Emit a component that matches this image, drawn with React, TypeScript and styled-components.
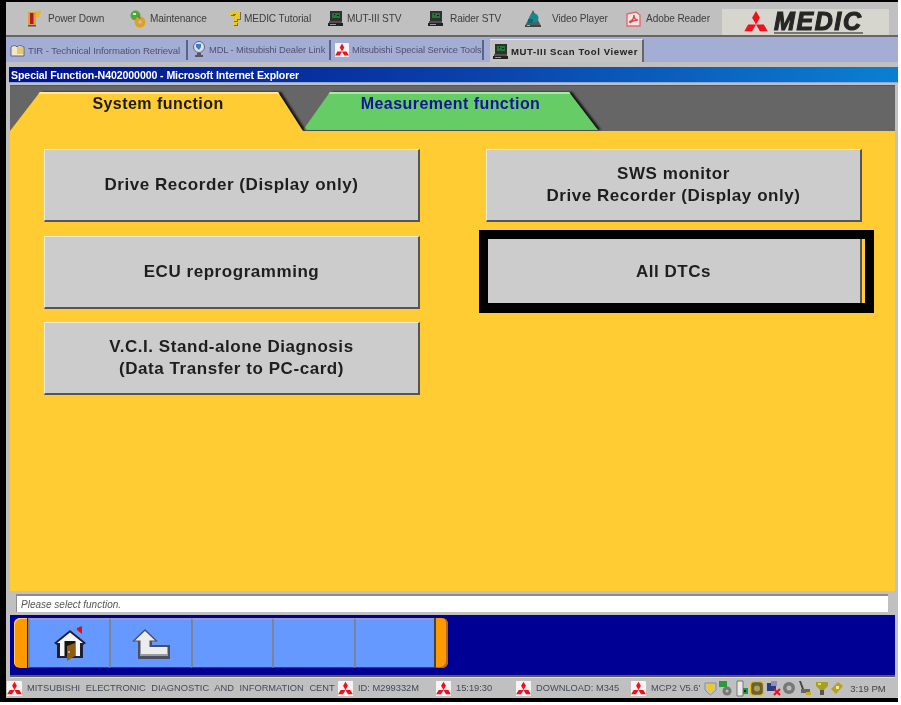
import React from "react";
import styled, { createGlobalStyle, css } from "styled-components";

const Global = createGlobalStyle`
  html, body { margin: 0; padding: 0; background: #fff; }
  body { width: 901px; height: 705px; overflow: hidden; font-family: "Liberation Sans", Arial, sans-serif; }
`;

const soft = (r: number) => css`filter: blur(${r}px);`;

const Frame = styled.div`
  width: 898px; height: 702px; background: #000;
  padding: 2px 0 4px 6px; box-sizing: border-box;
  display: flex; flex-direction: column;
`;
const Toolbar = styled.div`
  height: 33px; background: #c0c0c0; border-bottom: 2px solid #666;
  display: flex; align-items: center; flex: none;
`;
const ToolItem = styled.div<{ $w: number; $gap: number; $tg: number }>`
  flex: none; width: ${p => p.$w}px; margin-left: ${p => p.$gap}px;
  display: flex; align-items: center; gap: ${p => p.$tg}px; height: 20px;
`;
const ToolText = styled.span`
  font-size: 10.1px; color: #3c3c3c; white-space: nowrap; letter-spacing: -0.1px;
  ${soft(0.55)}
`;
const IconBox = styled.span`
  display: inline-flex; flex: none; ${soft(0.35)}
`;
const LogoPlate = styled.div`
  margin-left: 11px; margin-top: 7px; width: 167px; height: 26px; background: #d6d6ce;
  display: flex; align-items: center; flex: none; padding-left: 22px; box-sizing: border-box; gap: 6px;
`;
const LogoWord = styled.div`
  display: flex; flex-direction: column; align-items: stretch; ${soft(0.4)}
`;
const MedicText = styled.span`
  font-size: 25px; line-height: 20px; font-weight: 700; font-style: italic; color: #262626;
  letter-spacing: 1.6px; -webkit-text-stroke: 1.1px #262626; white-space: nowrap;
`;
const LogoRule = styled.span`
  height: 2px; background: #77776f; margin-top: 1px;
`;
const LinkBar = styled.div`
  height: 25px; flex: none; background: #a4aed4; display: flex; align-items: stretch;
`;
const LinkItem = styled.div<{ $w: number }>`
  flex: none; width: ${p => p.$w}px; display: flex; align-items: center; gap: 3px; box-sizing: border-box;
  padding-left: 4px; border-right: 2px solid #5a6488; margin: 3px 0 2px;
`;
const LinkText = styled.span<{ $fs: number }>`
  font-size: ${p => p.$fs}px; color: #50506e; white-space: nowrap; letter-spacing: -0.08px; ${soft(0.55)}
`;
const ActiveLink = styled.div`
  flex: none; width: 154px; margin: 2px 0 0 6px; background: #c4c4c4; display: flex; align-items: center; gap: 2px;
  padding-left: 3px; box-sizing: border-box; border-right: 2px solid #666; border-top: 1px solid #e6e6e6;
`;
const ActiveText = styled.span`
  font-size: 9.6px; font-weight: 700; color: #222; white-space: nowrap; letter-spacing: 0.6px; ${soft(0.45)}
`;
const Window = styled.div`
  flex: 1; display: flex; flex-direction: column; background: #c0c0c0; padding: 5px 0 0 3px; min-height: 0;
`;
const TitleBar = styled.div`
  height: 16px; flex: none; background: linear-gradient(90deg, #00108c 0%, #0a3fa8 50%, #0a80d0 100%);
  display: flex; align-items: center; padding-left: 2px;
  border-bottom: 1px solid #8ea8d8; box-sizing: border-box;
`;
const TitleText = styled.span`
  font-size: 10.6px; font-weight: 700; color: #fff; letter-spacing: -0.1px; white-space: nowrap; ${soft(0.45)}
`;
const Body = styled.div`
  flex: 1; display: flex; flex-direction: column; margin: 2px 3px 0 1px; min-height: 0;
`;
const TabStrip = styled.div`
  height: 46px; flex: none; background: #666; display: flex; align-items: flex-end;
  border-top: 1px solid #555; box-sizing: border-box;
`;
const TabShadow = styled.div<{ $front?: boolean }>`
  filter: drop-shadow(3px 0 1px #111);
  position: relative; z-index: ${p => (p.$front ? 2 : 1)};
  margin-bottom: ${p => (p.$front ? 0 : 1)}px;
`;
const Tab = styled.div<{ $bg: string; $hi: string; $w: number; $h: number; $top1: number; $top2: number; $fg: string; $pad: number }>`
  width: ${p => p.$w}px; height: ${p => p.$h}px; background: ${p => p.$bg};
  clip-path: polygon(0 100%, ${p => p.$top1}px 0, ${p => p.$top2}px 0, 100% 100%);
  box-shadow: inset 0 2px 0 ${p => p.$hi};
  box-sizing: border-box; padding: 3px 0 0 ${p => p.$pad}px; text-align: center;
  font-size: 16px; line-height: 18px; font-weight: 700; color: ${p => p.$fg};
  letter-spacing: 0.45px;
`;
const TabLabel = styled.span`
  display: inline-block; ${soft(0.4)}
`;
const Content = styled.div`
  position: relative; z-index: 3;
  flex: 1; background: #fc3; display: grid; grid-template-columns: 376px 376px; column-gap: 66px;
  grid-auto-rows: 73px; row-gap: 13.5px; padding: 18px 0 0 34px; align-content: start;
  min-height: 0;
`;
const FnButton = styled.button<{ $framed?: boolean }>`
  position: relative; margin: 0; padding: 0; background: #ccc;
  border-style: solid; border-width: 1px 2px 2px 1px;
  border-color: #ecead8 #555 #555 #ecead8;
  font-family: "Liberation Sans", Arial, sans-serif; font-weight: 700; font-size: 17px; line-height: 22px; color: #1e1e1e;
  letter-spacing: 0.55px;
  ${p => p.$framed && css`
    &::after {
      content: ""; position: absolute; top: -7px; right: -14px; bottom: -6px; left: -8px;
      border: 9px solid #000; box-sizing: border-box; border-bottom-width: 10px;
    }
  `}
`;
const FnLabel = styled.span`
  display: block; ${soft(0.35)}
`;
const StatusRow = styled.div`
  height: 24px; flex: none; background: #c0c0c0; padding: 3px 7px 3px 6px; box-sizing: border-box;
  display: flex;
`;
const StatusField = styled.div`
  flex: 1; background: #fff; border-top: 2px solid #8c8c8c; border-left: 1px solid #8c8c8c;
  display: flex; align-items: center; padding-left: 4px;
`;
const StatusText = styled.span`
  font-size: 10px; font-style: italic; color: #555; ${soft(0.4)}
`;
const NavBar = styled.div`
  height: 60px; flex: none; background: #000094; display: flex; padding: 3px 0 7px 4px; box-sizing: border-box;
`;
const NavCap = styled.div<{ $side: "l" | "r" }>`
  width: 14px; flex: none; background: #f90; box-sizing: border-box;
  ${p => p.$side === "l"
    ? css`border-radius: 6px 0 0 6px; border-right: 1px solid #222; box-shadow: inset 1px 1px 0 #fc6;`
    : css`border-radius: 0 6px 6px 0; border-left: 2px solid #444; box-shadow: inset -2px -1px 0 #b36b00;`}
`;
const NavCell = styled.div<{ $w: number }>`
  width: ${p => p.$w}px; flex: none; background: #69f; box-sizing: border-box;
  border-top: 2px solid #9a9ac4; border-left: 2px solid #7a8494; border-bottom: 1px solid #2a3a88;
  display: flex; align-items: center; justify-content: center;
  &:first-of-type { border-left: 0; }
`;
const Divider = styled.div`
  height: 3px; flex: none; background: #5a5a5a; border-bottom: 1px solid #ddd; box-sizing: border-box;
`;
const StatusBar = styled.div`
  height: 20px; flex: none; background: #c0c0c0; display: flex; align-items: center;
  margin: 0 0 0 -3px; box-sizing: border-box; padding-left: 0;
`;
const BarCell = styled.div<{ $w: number; $ws?: number }>`
  flex: none; width: ${p => p.$w}px; display: flex; align-items: center; gap: 5px;
  overflow: hidden; white-space: nowrap; word-spacing: ${p => p.$ws ?? 0}px;
`;
const BarText = styled.span`
  font-size: 9.3px; color: #44485c; ${soft(0.5)}
`;
const Tray = styled.div`
  display: flex; align-items: center; gap: 1.4px; flex: none; ${soft(0.45)}
`;
const Clock = styled.span`
  font-size: 9.6px; color: #444; margin-left: 6px; white-space: nowrap; ${soft(0.5)}
`;

const MitsuMark = ({ s = 14, plate = true }: { s?: number; plate?: boolean }) => (
  <svg width={s} height={s} viewBox="0 0 24 24" style={{ background: plate ? "#f4f4f4" : "transparent", flex: "none" }}>
    <path fill="#f2101c" d="M12 1l3.900 6.750L12 14.500 8.100 7.750zM12 14.500h7.800l3.900 6.750h-7.800zM12 14.500H4.200L.3 21.250h7.800z" />
  </svg>
);
const Power = () => (
  <svg width="14" height="17" viewBox="0 0 14 17">
    <path fill="#dca040" d="M1 2h8v14H1z" /><path fill="#b0182a" d="M3 3h3.500v11H3z" />
    <path fill="#ecb428" d="M9 1h5v3l-2 1v2H9z" /><path fill="#555" d="M1 15h8v1.500H1z" />
  </svg>
);
const Maint = () => (
  <svg width="16" height="18" viewBox="0 0 16 18">
    <circle cx="5.500" cy="5.500" r="5" fill="#4ea83a" /><path fill="#d8e8c8" d="M3 3h3v2H3z" />
    <circle cx="10" cy="12" r="5.500" fill="#e0a020" /><circle cx="10" cy="12" r="1.800" fill="#c0c0c0" />
    <path fill="#6a7a50" d="M8 5l3 3-1 1-3-3z" />
  </svg>
);
const Question = () => (
  <svg width="14" height="17" viewBox="0 0 14 17">
    <path fill="#555" d="M3 2h10v8H10v2H6V7h3V5H7v1H3zM6 13h4v3H6z" opacity=".8" />
    <path fill="#eec820" d="M1 1h11v8H9v2H5V6h3V4H5v1H1zM5 12h4v3H5z" />
  </svg>
);
const Computer = () => (
  <svg width="16" height="17" viewBox="0 0 16 17">
    <path fill="#303030" d="M2 1h12v10H2z" /><path fill="#1e7a30" d="M4 3h8v5H4z" /><path fill="#113" d="M6 4h1v1H6zM9 5h2v1H9z" />
    <path fill="#505050" d="M1 11h13v2H1z" /><path fill="#222" d="M0 13h15v3H0z" /><path fill="#999" d="M2 14h6v1H2z" />
  </svg>
);
const Video = () => (
  <svg width="18" height="19" viewBox="0 0 18 19">
    <path fill="#555c60" d="M1 17l3-6 5-10 5 10 3 6z" /><circle cx="10" cy="9" r="4.500" fill="#138a90" />
    <path fill="#0a6a70" d="M4 10h5v4H4z" /><path fill="#444" d="M1 16h16v2H1z" /><path fill="#aab" d="M3 16h3v1H3z" />
  </svg>
);
const Adobe = () => (
  <svg width="15" height="16" viewBox="0 0 15 16">
    <path fill="#f6e4e4" stroke="#e06a70" strokeWidth="1.400" d="M1 3l9-2 4 3v11H1z" />
    <path fill="none" stroke="#d8484e" strokeWidth="1.400" d="M3 11c3-1 5-3 5-7 0 3 1 5 4 5-3 0-6 1-8 3" />
  </svg>
);
const Book = () => (
  <svg width="15" height="15" viewBox="0 0 15 15">
    <path fill="#f2e8c8" stroke="#5a6488" d="M1 4c1-1 3-2 5-1l1 1 1-1c2-1 4 0 6 1v9H1z" /><path fill="#e8c860" d="M7 4h6v7H7z" />
  </svg>
);
const Globe = () => (
  <svg width="14" height="18" viewBox="0 0 14 18">
    <circle cx="7" cy="6" r="5.500" fill="#dde" stroke="#667" /><path fill="#3a80c0" d="M4 3h5v3l-2 3-3-3z" />
    <path fill="#556" d="M5 12h4v2H5zM3 14h8v2H3z" />
  </svg>
);
const Home = () => (
  <svg width="32" height="36" viewBox="0 0 32 36">
    <path fill="#1c2030" d="M16 4L0 17l3 2v13h26V19l3-2z" />
    <path fill="#f6f6f6" d="M16 6.500L3 17h3v13h20V17h3z" />
    <path fill="#d8121c" d="M23 2l5-2v8l-5-4z" />
    <path fill="#141414" d="M10.500 15h11v15h-11z" />
    <path fill="#8f5c16" d="M13 20l8-3v13l-8 5z" />
    <circle cx="15" cy="26" r="1" fill="#dca" />
  </svg>
);
const UpArrow = () => (
  <svg width="38" height="32" viewBox="0 0 38 32">
    <path fill="#4a5064" d="M13 1L0 13.500h6V31h32V17H20v-3.500h6z" />
    <path fill="#ececec" d="M13 3L3 12.500h5.500V28h27v-9H17.500v-6.500H23z" />
    <path fill="#9a9aa0" d="M8.500 26h27v2h-27z" />
  </svg>
);

const trayIcons: React.ReactNode[] = [
  <svg key="a" width="13" height="15" viewBox="0 0 13 15"><path fill="#c8c8a0" stroke="#8888a8" d="M1 2h11v7l-5.500 5L1 9z" /><path fill="#eec820" d="M4 3h5v6l-2.500 2L4 9z" /></svg>,
  <svg key="b" width="15" height="16" viewBox="0 0 15 16"><path fill="#2a9a3a" d="M1 1h8v6H1z" /><circle cx="9" cy="11" r="4.500" fill="#777" /><circle cx="9" cy="11" r="1.500" fill="#bbb" /></svg>,
  <svg key="c" width="14" height="17" viewBox="0 0 14 17"><path fill="#e8e8e8" stroke="#777" d="M2 1h6v15H2z" /><path fill="#1a9a40" d="M8 8h5v6H8z" /><path fill="#222" d="M9 10h2v2H9z" /></svg>,
  <svg key="d" width="14" height="15" viewBox="0 0 14 15"><rect x="0.500" y="0.500" width="13" height="14" rx="4" fill="#6a6030" stroke="#eebb10" strokeWidth="1.400" /><circle cx="7" cy="7.500" r="3" fill="#a8a060" /></svg>,
  <svg key="e" width="15" height="16" viewBox="0 0 15 16"><path fill="#2a3a80" d="M1 3h9v8H1z" /><path fill="#8a90c0" d="M5 1h6v5H5z" /><path stroke="#e81020" strokeWidth="2" d="M8 9l6 6M14 9l-6 6" /></svg>,
  <svg key="f" width="14" height="14" viewBox="0 0 14 14"><circle cx="7" cy="7" r="6" fill="#777" /><circle cx="7" cy="7" r="2.500" fill="#bbb" /></svg>,
  <svg key="g" width="16" height="16" viewBox="0 0 16 16"><path fill="#444" d="M2 1h2l3 8H5z" /><path fill="#666" d="M4 9h9v4H4z" /><path fill="#c8b020" d="M9 12h5v3H9z" /></svg>,
  <svg key="h" width="14" height="16" viewBox="0 0 14 16"><path fill="#a8a020" d="M1 2h12v4l-4 4H5L1 6z" /><path fill="#555" d="M5 10h4v5H5z" /><path fill="#dcdc70" d="M3 3h3v2H3z" /></svg>,
  <svg key="i" width="14" height="14" viewBox="0 0 14 14"><path fill="#b8a020" d="M1 8l7-7 5 4-7 8z" /><path fill="#eee8a0" d="M6 5h3v3H6z" /></svg>,
];

export default function App() {
  return (
    <>
      <Global />
      <Frame>
        <Toolbar>
          <ToolItem $w={77} $gap={21} $tg={7}><IconBox><Power /></IconBox><ToolText>Power Down</ToolText></ToolItem>
          <ToolItem $w={78} $gap={26} $tg={4}><IconBox><Maint /></IconBox><ToolText>Maintenance</ToolText></ToolItem>
          <ToolItem $w={83} $gap={20} $tg={2}><IconBox><Question /></IconBox><ToolText>MEDIC Tutorial</ToolText></ToolItem>
          <ToolItem $w={75} $gap={17} $tg={3}><IconBox><Computer /></IconBox><ToolText>MUT-III STV</ToolText></ToolItem>
          <ToolItem $w={74} $gap={25} $tg={6}><IconBox><Computer /></IconBox><ToolText>Raider STV</ToolText></ToolItem>
          <ToolItem $w={84} $gap={22} $tg={10}><IconBox><Video /></IconBox><ToolText>Video Player</ToolText></ToolItem>
          <ToolItem $w={85} $gap={18} $tg={5}><IconBox><Adobe /></IconBox><ToolText>Adobe Reader</ToolText></ToolItem>
          <LogoPlate>
            <MitsuMark s={24} plate={false} />
            <LogoWord><MedicText>MEDIC</MedicText><LogoRule /></LogoWord>
          </LogoPlate>
        </Toolbar>
        <LinkBar>
          <LinkItem $w={182}><Book /><LinkText $fs={9.6}>TIR - Technical Information Retrieval</LinkText></LinkItem>
          <LinkItem $w={143}><Globe /><LinkText $fs={9.3}>MDL - Mitsubishi Dealer Link</LinkText></LinkItem>
          <LinkItem $w={153}><MitsuMark s={14} /><LinkText $fs={9.3}>Mitsubishi Special Service Tools</LinkText></LinkItem>
          <ActiveLink><IconBox><Computer /></IconBox><ActiveText>MUT-III Scan Tool Viewer</ActiveText></ActiveLink>
        </LinkBar>
        <Window>
          <TitleBar><TitleText>Special Function-N402000000 - Microsoft Internet Explorer</TitleText></TitleBar>
          <Body>
            <TabStrip>
              <TabShadow $front>
                <Tab $bg="#fc3" $hi="#ffe9a0" $w={293} $h={39} $top1={30} $top2={268} $fg="#1a1a10" $pad={3}>
                  <TabLabel>System function</TabLabel>
                </Tab>
              </TabShadow>
              <TabShadow>
                <Tab $bg="#6c6" $hi="#a8e8a8" $w={295} $h={38} $top1={27} $top2={266} $fg="#14149a" $pad={0}>
                  <TabLabel>Measurement function</TabLabel>
                </Tab>
              </TabShadow>
            </TabStrip>
            <Content>
              <FnButton><FnLabel>Drive Recorder (Display only)</FnLabel></FnButton>
              <FnButton><FnLabel>SWS monitor<br />Drive Recorder (Display only)</FnLabel></FnButton>
              <FnButton><FnLabel>ECU reprogramming</FnLabel></FnButton>
              <FnButton $framed><FnLabel>All DTCs</FnLabel></FnButton>
              <FnButton><FnLabel>V.C.I. Stand-alone Diagnosis<br />(Data Transfer to PC-card)</FnLabel></FnButton>
            </Content>
            <StatusRow><StatusField><StatusText>Please select function.</StatusText></StatusField></StatusRow>
            <NavBar>
              <NavCap $side="l" />
              <NavCell $w={81}><IconBox><Home /></IconBox></NavCell>
              <NavCell $w={82}><IconBox><UpArrow /></IconBox></NavCell>
              <NavCell $w={81} />
              <NavCell $w={82} />
              <NavCell $w={80} />
              <NavCap $side="r" />
            </NavBar>
            <Divider />
            <StatusBar>
              <BarCell $w={331} $ws={3}><MitsuMark s={15} /><BarText>MITSUBISHI ELECTRONIC DIAGNOSTIC AND INFORMATION CENT</BarText></BarCell>
              <BarCell $w={98}><MitsuMark s={15} /><BarText>ID: M299332M</BarText></BarCell>
              <BarCell $w={80}><MitsuMark s={15} /><BarText>15:19:30</BarText></BarCell>
              <BarCell $w={115}><MitsuMark s={15} /><BarText>DOWNLOAD: M345</BarText></BarCell>
              <BarCell $w={73}><MitsuMark s={15} /><BarText>MCP2 V5.6'</BarText></BarCell>
              <Tray>{trayIcons}</Tray>
              <Clock>3:19 PM</Clock>
            </StatusBar>
          </Body>
        </Window>
      </Frame>
    </>
  );
}
